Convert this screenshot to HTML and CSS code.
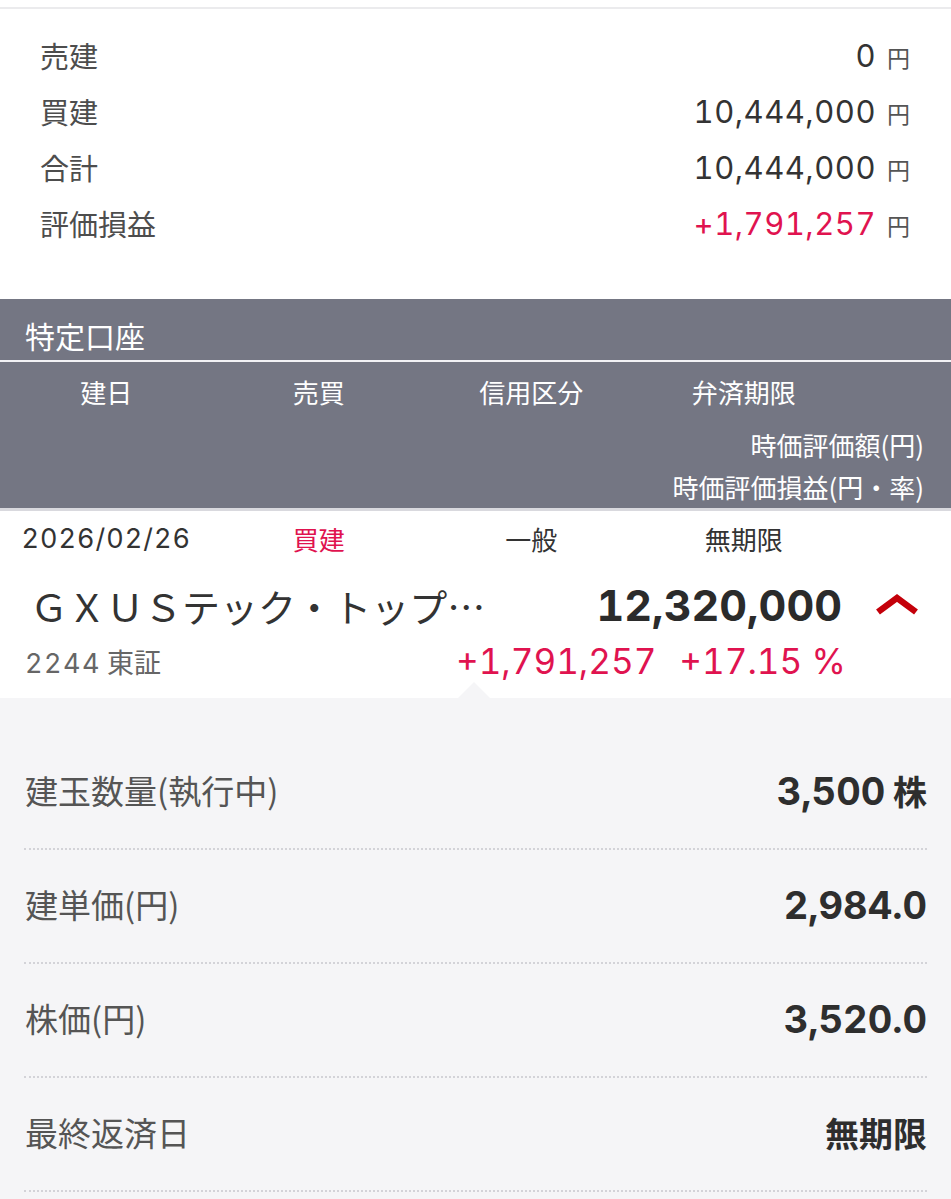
FILE: index.html
```html
<!DOCTYPE html>
<html lang="ja">
<head>
<meta charset="utf-8">
<title>建玉</title>
<link rel="stylesheet" href="styles.css">
</head>
<body>
<div class="topline"></div>
<section class="summary">
  <div class="sum-row"><span class="sum-label">売建</span><span class="sum-val"><span class="num">0</span><span class="yen">円</span></span></div>
  <div class="sum-row"><span class="sum-label">買建</span><span class="sum-val"><span class="num">10,444,000</span><span class="yen">円</span></span></div>
  <div class="sum-row"><span class="sum-label">合計</span><span class="sum-val"><span class="num">10,444,000</span><span class="yen">円</span></span></div>
  <div class="sum-row"><span class="sum-label">評価損益</span><span class="sum-val"><span class="num red">+1,791,257</span><span class="yen">円</span></span></div>
</section>
<section class="band">
  <div class="band-title">特定口座</div>
  <div class="band-divider"></div>
  <div class="cols">
    <span>建日</span><span>売買</span><span>信用区分</span><span>弁済期限</span>
  </div>
  <div class="band-right first">時価評価額(円)</div>
  <div class="band-right">時価評価損益(円・率)</div>
</section>
<div class="band-edge"></div>
<section class="position">
  <div class="cols data">
    <span class="date">2026/02/26</span><span class="red">買建</span><span>一般</span><span>無期限</span>
  </div>
  <div class="name-row">
    <span class="name">ＧＸＵＳテック・トップ…</span>
    <span class="amount">12,320,000</span>
    <svg class="caret" width="44" height="22" viewBox="0 0 44 22" aria-hidden="true"><polyline points="3,19 22,5 41,19" fill="none" stroke="#c4000a" stroke-width="6.5" stroke-linejoin="miter"/></svg>
  </div>
  <div class="code-row">
    <span class="code"><span class="digits">2244</span> 東証</span>
    <span class="pl red"><span>+1,791,257</span><span>+17.15 %</span></span>
  </div>
  <div class="pointer"></div>
</section>
<section class="detail">
  <div class="d-row"><span class="d-label">建玉数量(執行中)</span><span class="d-val"><span class="digits">3,500</span> 株</span></div>
  <div class="d-row"><span class="d-label">建単価(円)</span><span class="d-val"><span class="digits">2,984.0</span></span></div>
  <div class="d-row"><span class="d-label">株価(円)</span><span class="d-val"><span class="digits">3,520.0</span></span></div>
  <div class="d-row"><span class="d-label">最終返済日</span><span class="d-val">無期限</span></div>
</section>
</body>
</html>
```
FILE: styles.css
```css
* { box-sizing: border-box; }
html, body { margin: 0; padding: 0; }
body {
  width: 951px;
  background: #f5f5f7;
  font-family: "Noto Sans CJK JP", "Noto Sans", sans-serif;
  color: #333;
  overflow: hidden;
}
.red { color: #e0134f; }
.num, .date, .amount, .pl, .digits {
  font-family: Inter, "Noto Sans CJK JP", sans-serif;
  font-variant-numeric: tabular-nums;
}

.topline {
  height: 9px;
  background: #fff;
  border-bottom: 2px solid #ebebed;
}

.summary {
  background: #fff;
  padding: 18px 41px 48px 40px;
}
.sum-row {
  display: flex;
  justify-content: space-between;
  align-items: center;
  height: 56px;
}
.sum-label {
  font-size: 29px;
  color: #4d4d4d;
  line-height: 1;
}
.sum-val { display: flex; align-items: baseline; gap: 11px; }
.num { font-size: 31px; color: #333; line-height: 1; letter-spacing: 0.5px; }
.num.red { color: #e0134f; }
.yen { font-size: 23px; color: #555; line-height: 1; }

.band {
  background: #747683;
  color: #fff;
}
.band-title {
  font-size: 30px;
  line-height: 38px;
  padding: 17px 0 6px 25px;
}
.band-divider { height: 2px; background: #f2f2f5; }
.cols {
  display: grid;
  grid-template-columns: repeat(4, 212.5px);
  text-align: center;
  font-size: 26px;
  line-height: 38px;
  padding-top: 11px;
}
.band-right {
  text-align: right;
  font-size: 26px;
  line-height: 42px;
  padding-right: 27px;
}
.band-right.first { margin-top: 13px; }
.band-edge { height: 3px; background: #d9d9de; }

.position {
  position: relative;
  background: #fff;
  padding-bottom: 17px;
}
.cols.data {
  padding-top: 9px;
  color: #333;
}
.cols.data .date { font-size: 27px; letter-spacing: 1px; }
.cols.data .red { color: #e0134f; }
.name-row {
  display: flex;
  align-items: center;
  height: 72px;
  margin-top: 11px;
  padding: 0 32px 0 30px;
}
.name {
  flex: 1;
  font-size: 38px;
  color: #333;
  white-space: nowrap;
  overflow: hidden;
}
.amount {
  font-size: 43px;
  font-weight: 700;
  color: #2b2b2b;
  margin-right: 33px;
}
.caret { display: block; margin-top: -2px; }
.code-row {
  display: flex;
  justify-content: space-between;
  align-items: center;
  height: 40px;
  padding: 0 105px 0 25px;
}
.code { font-size: 27px; color: #666; }
.code .digits { letter-spacing: 1.5px; }
.pl { display: flex; gap: 23px; font-size: 35px; }
.pointer {
  position: absolute;
  left: 458px;
  bottom: 0;
  width: 0;
  height: 0;
  border-left: 16px solid transparent;
  border-right: 16px solid transparent;
  border-bottom: 16px solid #f5f5f7;
}

.detail {
  background: #f5f5f7;
  padding: 38px 24px 0 24px;
}
.d-row {
  display: flex;
  justify-content: space-between;
  align-items: center;
  height: 114px;
  padding: 0 0 4px 1px;
  border-bottom: 2px dotted #d3d3d8;
}
.d-label { font-size: 33px; color: #555; }
.d-val { font-size: 34px; font-weight: 700; color: #2e2e2e; }
.d-val .digits { font-size: 38px; }
```
